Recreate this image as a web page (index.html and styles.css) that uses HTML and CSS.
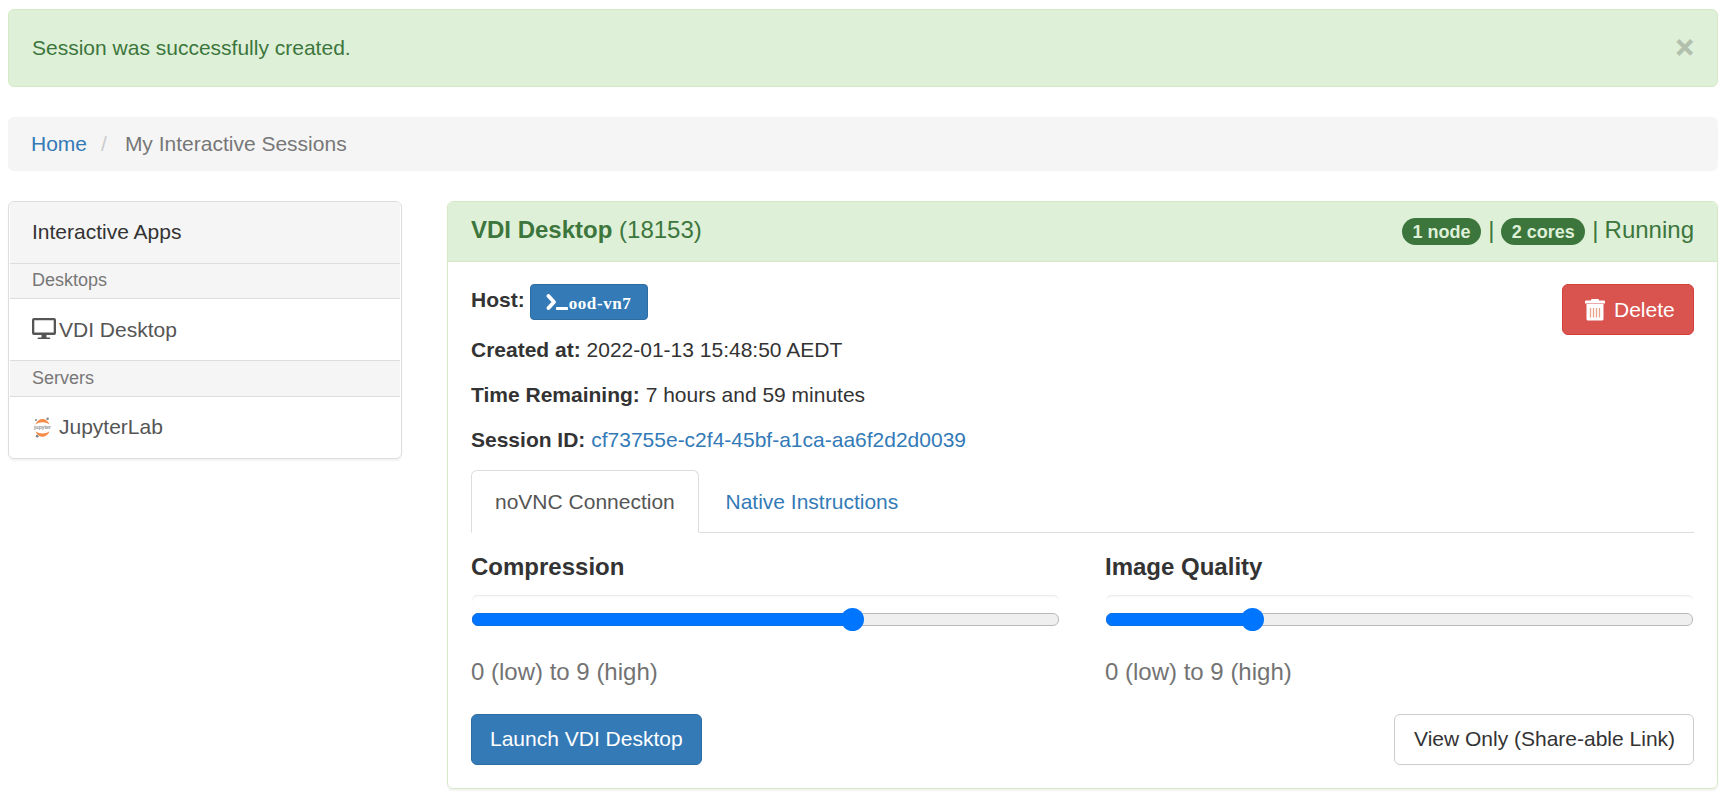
FILE: index.html
```html
<!DOCTYPE html>
<html lang="en">
<head>
<meta charset="utf-8">
<title>My Interactive Sessions</title>
<link rel="stylesheet" href="styles.css">
</head>
<body>
<div class="alert"><span>Session was successfully created.</span><button class="close" aria-label="Close">×</button></div>
<nav class="breadcrumb"><a href="#">Home</a><span class="sep">/</span><span class="current">My Interactive Sessions</span></nav>
<div class="layout">
  <aside class="apps">
    <div class="apps-title">Interactive Apps</div>
    <div class="apps-group">Desktops</div>
    <a class="apps-item desktop" href="#"><svg class="icon-app" viewBox="0 0 27 24"><path fill="#555" fill-rule="evenodd" d="M2 0h20q2 0 2 2v13q0 2-2 2h-7.500v2.500h2.900q1 0 1 1.500H5.500q0-1.500 1-1.500h3V17H2q-2 0-2-2V2q0-2 2-2zM2.300 2.300v12.200h19.400V2.300z"/></svg>VDI Desktop</a>
    <div class="apps-group servers">Servers</div>
    <a class="apps-item" href="#"><svg class="icon-app" viewBox="0 0 27 24"><path fill="#f37726" d="M3.500 7.600C6 0 15 0 17.500 7.600 13 4.600 8 4.600 3.500 7.600zM3.500 14.300c4.500 3 9.500 3 14 0-2.500 7.300-11.500 7.300-14 0z" opacity=".85"/><g fill="#888"><circle cx="15.600" cy="1.800" r="1.300"/><circle cx="4" cy="3" r="1"/><circle cx="5.200" cy="19.200" r="1.400"/></g><text class="icon-word" x="2" y="12.200" textLength="17">jupyter</text></svg>JupyterLab</a>
  </aside>
  <main class="session">
    <header class="session-head">
      <div><b>VDI Desktop</b> (18153)</div>
      <div class="status"><span class="badge">1 node</span><span>|</span><span class="badge cores">2 cores</span><span>|</span><span class="state">Running</span></div>
    </header>
    <div class="session-body">
      <div class="details">
        <div class="facts">
          <div class="host"><b>Host:</b><a class="btn-host" href="#"><svg class="icon-term" viewBox="0 0 22 18"><path d="M2.500 2l5.500 6-5.500 6" fill="none" stroke="#fff" stroke-width="3.800" stroke-linecap="round" stroke-linejoin="round"/><rect x="10" y="13" width="12" height="3" rx=".8" fill="#fff"/></svg>ood-vn7</a></div>
          <p><b>Created at:</b> 2022-01-13 15:48:50 AEDT</p>
          <p><b>Time Remaining:</b> 7 hours and 59 minutes</p>
          <p><b>Session ID:</b> <a href="#">cf73755e-c2f4-45bf-a1ca-aa6f2d2d0039</a></p>
        </div>
        <button class="btn danger"><svg class="icon-trash" viewBox="0 0 20 22"><path fill="#fff" d="M7 0h6q1 0 1 1v.500h5q1 0 1 1V4.500H0V2.500q0-1 1-1h5V1q0-1 1-1z"/><path fill="#fff" d="M1.500 5h17v15q0 1.500-1.500 1.500H3q-1.500 0-1.500-1.500z"/><path stroke="#e8a287" stroke-width="1.300" d="M5.500 9v9.500M8.500 9v9.500M11.500 9v9.500M14.500 9v9.500"/></svg>Delete</button>
      </div>
      <div class="tabs"><a class="tab active" href="#">noVNC Connection</a><a class="tab" href="#">Native Instructions</a></div>
      <div class="sliders">
        <div>
          <label class="slider-label">Compression</label>
          <div class="range"><div class="track"><div class="fill" style="width:65%"></div></div></div>
          <p class="help">0 (low) to 9 (high)</p>
        </div>
        <div>
          <label class="slider-label">Image Quality</label>
          <div class="range"><div class="track"><div class="fill" style="width:25%"></div></div></div>
          <p class="help">0 (low) to 9 (high)</p>
        </div>
      </div>
      <div class="actions"><button class="btn primary">Launch VDI Desktop</button><button class="btn plain">View Only (Share-able Link)</button></div>
    </div>
  </main>
</div>
</body>
</html>
```
FILE: styles.css
```css
* { box-sizing: border-box; }
body { margin: 0; padding: 9px 8px 0; height: 792px; overflow: hidden; background: #fff; color: #333; font: 21px/30px "Liberation Sans", Arial, sans-serif; }
a { color: #337ab7; text-decoration: none; }
button { font: inherit; }
p { margin: 0; }

.alert { display: flex; justify-content: space-between; height: 78px; padding: 23px 23px 0; border: 1px solid #d6e9c6; border-radius: 6px; background: #dff0d8; color: #3c763d; }
.close { height: 30px; margin-top: -1px; padding: 0; border: 0; background: none; color: #000; font-size: 31.500px; font-weight: bold; line-height: 26px; text-shadow: 0 1px 0 #fff; opacity: .2; -webkit-text-stroke: .7px #000; }
.breadcrumb { display: flex; height: 54px; margin: 30px 0; padding: 12px 23px; border-radius: 6px; background: #f5f5f5; }
.sep { padding: 0 18px 0 14px; color: #ccc; }
.current { color: #777; }

.layout { display: grid; grid-template-columns: 394px 1271px; gap: 45px; align-items: start; }
.apps { height: 258px; border: 1px solid #ddd; border-radius: 6px; box-shadow: 0 1.500px 1.500px rgba(0,0,0,.05); overflow: hidden; padding: 0 1px; }
.apps-title { height: 61px; padding: 15px 22px; background: #f5f5f5; }
.apps-group { height: 36px; padding: 1px 22px; border: solid #ddd; border-width: 1px 0; background: #f5f5f5; color: #777; font-size: 18px; }
.servers { height: 37px; padding-top: 2px; }
.apps-item { display: flex; height: 61px; padding: 15px 22px; color: #555; }
.desktop { padding-top: 16px; }
.icon-app { width: 27px; height: 24px; margin-top: 5px; }
.desktop .icon-app { margin-top: 3px; }
.icon-word { fill: #999; font: bold 5.500px "Liberation Sans", Arial, sans-serif; }

.session { height: 588px; border: 1px solid #d6e9c6; border-radius: 6px; box-shadow: 0 1.500px 1.500px rgba(0,0,0,.05); overflow: hidden; }
.session-head { display: flex; justify-content: space-between; height: 60px; padding: 13px 23px 0; border-bottom: 1px solid #d6e9c6; background: #dff0d8; color: #3c763d; font-size: 24px; }
.status { display: flex; }
.badge { width: 79px; height: 27px; margin: 3px 7px 0 0; border-radius: 14px; background: #3c763d; color: #dff0d8; font-size: 18px; font-weight: bold; line-height: 28px; text-align: center; }
.cores { width: 84px; margin-left: 7px; }
.state { margin-left: 6px; }
.session-body { padding: 22px 23px 0; }
.details { display: flex; justify-content: space-between; align-items: flex-start; height: 186px; }
.facts p { margin-bottom: 15px; }
.host { display: flex; height: 51px; }
.host b { padding-top: 1px; }
.btn-host { display: flex; width: 118px; height: 36px; margin-left: 5px; padding: 9px 0 0 15px; border: 1px solid #2e6da4; border-radius: 4px; background: #337ab7; color: #fff; font: bold 17px/19px "Liberation Serif", serif; letter-spacing: .6px; }
.icon-term { width: 22px; height: 18px; margin-right: 1px; }
.btn { display: flex; height: 51px; padding: 9px 18px; border: 1px solid; border-radius: 6px; align-items: center; white-space: nowrap; }
.danger { width: 132px; padding-left: 22px; border-color: #d43f3a; background: #d9534f; color: #fff; }
.icon-trash { width: 20px; height: 22px; margin-right: 9px; }

.tabs { display: flex; height: 63px; border-bottom: 1px solid #ddd; }
.tab { height: 63px; padding: 17px 24px 0; white-space: nowrap; }
.tab + .tab { margin-left: 2.500px; }
.active { width: 228px; padding: 16px 0 0 23px; border: 1px solid #ddd; border-bottom-color: #fff; border-radius: 6px 6px 0 0; background: #fff; color: #555; }
.sliders { display: grid; grid-template-columns: 589px 589px; gap: 45px; margin-top: 17px; }
.slider-label { display: block; height: 44px; font-size: 24px; font-weight: bold; line-height: 34px; }
.range { height: 51px; padding-top: 18px; border: 1px solid transparent; border-radius: 6px; box-shadow: inset 0 2px 2px -1px rgba(0,0,0,.1); }
.track { width: 587px; height: 13px; border: 1px solid #b9b9b9; border-radius: 6px; background: #efefef; }
.fill { position: relative; height: 13px; margin: -1px; border: 1px solid #0a70e6; border-radius: 6px 0 0 6px; background: #0075ff; }
.fill::after { content: ""; position: absolute; right: -13px; top: -6px; width: 23px; height: 23px; border-radius: 50%; background: #0075ff; }
.help { height: 54px; padding-top: 10px; color: #737373; font-size: 24px; line-height: 34px; }
.actions { display: flex; justify-content: space-between; margin-top: 15px; }
.actions .btn { padding-bottom: 11px; }
.primary { border-color: #2e6da4; background: #337ab7; color: #fff; }
.plain { width: 300px; padding-left: 19px; border-color: #ccc; background: #fff; color: #333; }
```
